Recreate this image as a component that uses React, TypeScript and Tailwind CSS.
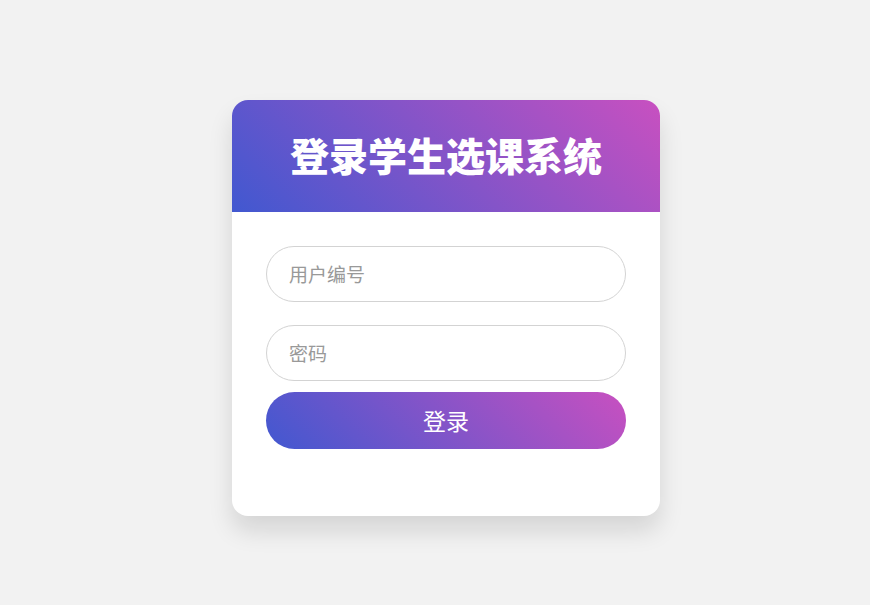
export default function App() {
  return (
    <div
      className="min-h-[605px] w-full bg-[#f2f2f2] flex justify-center pt-[100px] pl-[22px]"
      style={{ fontFamily: '"Noto Sans CJK SC", "Noto Sans", sans-serif' }}
    >
      <div className="w-[428px] h-[416px] bg-white rounded-[16px] overflow-hidden shadow-[0_15px_25px_rgba(0,0,0,0.12)] flex flex-col">
        <div className="h-[112px] flex items-center justify-center pb-[4px] bg-[linear-gradient(45deg,#4158d0,#c850c0)]">
          <h1 className="text-white text-[39px] font-black leading-none">登录学生选课系统</h1>
        </div>
        <div className="px-[34px] pt-[34px] flex flex-col">
          <input
            type="text"
            placeholder="用户编号"
            className="h-[56px] w-full rounded-full border border-[#d3d3d3] px-[22px] pb-[2px] text-[19px] text-[#333] placeholder:text-[#999] outline-none"
          />
          <input
            type="password"
            placeholder="密码"
            className="mt-[23px] h-[56px] w-full rounded-full border border-[#d3d3d3] px-[22px] pb-[2px] text-[19px] text-[#333] placeholder:text-[#999] outline-none"
          />
          <button className="mt-[11px] h-[57px] w-full rounded-full text-white text-[23px] bg-[linear-gradient(45deg,#4158d0,#c850c0)]">
            登录
          </button>
        </div>
      </div>
    </div>
  );
}
